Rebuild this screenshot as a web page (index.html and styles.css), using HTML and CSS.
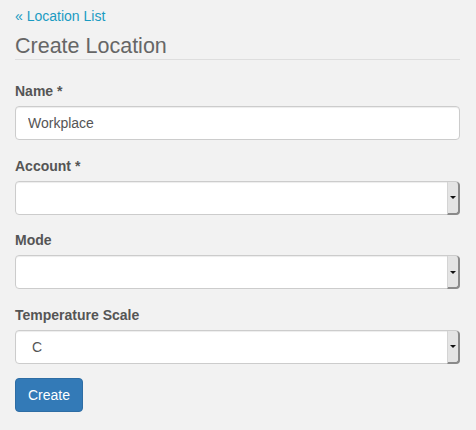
FILE: index.html
```html
<!DOCTYPE html>
<html>
<head>
<meta charset="utf-8">
<link rel="stylesheet" href="styles.css">
</head>
<body>
<div class="page">
  <a class="back" href="#">« Location List</a>
  <h1 class="title">Create Location</h1>
  <form class="form">
    <div class="group">
      <label class="label">Name *</label>
      <input class="control" type="text" value="Workplace">
    </div>
    <div class="group">
      <label class="label">Account *</label>
      <div class="select-wrap">
        <select class="control select"><option></option></select>
        <span class="select-btn"><span class="arrow"></span></span>
      </div>
    </div>
    <div class="group">
      <label class="label">Mode</label>
      <div class="select-wrap">
        <select class="control select"><option></option></select>
        <span class="select-btn"><span class="arrow"></span></span>
      </div>
    </div>
    <div class="group last">
      <label class="label">Temperature Scale</label>
      <div class="select-wrap">
        <select class="control select"><option>C</option></select>
        <span class="select-btn"><span class="arrow"></span></span>
      </div>
    </div>
    <button class="btn" type="button">Create</button>
  </form>
</div>
</body>
</html>
```

FILE: styles.css
```css
html, body {
  margin: 0;
  padding: 0;
  background: #f2f2f2;
}
body {
  font-family: "Liberation Sans", Arial, sans-serif;
  font-size: 14px;
  line-height: 20px;
  color: #555;
}
.page {
  padding: 6px 16px 0 15px;
}
.back {
  display: block;
  color: #1a9bc2;
  text-decoration: none;
}
.title {
  margin: 9px 0 21px;
  padding: 0 0 2px;
  font-size: 21.5px;
  line-height: 22px;
  font-weight: normal;
  color: #666;
  border-bottom: 1px solid #dedede;
}
.group {
  margin-bottom: 15.5px;
}
.group.last {
  margin-bottom: 14px;
}
.label {
  display: block;
  font-weight: bold;
  margin-bottom: 5px;
  color: #555;
}
.control {
  display: block;
  box-sizing: border-box;
  width: 100%;
  height: 34px;
  padding: 6px 12px;
  font-family: inherit;
  font-size: 14px;
  color: #555;
  background: #fff;
  border: 1px solid #ccc;
  border-radius: 4px;
  box-shadow: inset 0 1px 1px rgba(0,0,0,0.075);
  outline: none;
}
.select-wrap {
  position: relative;
}
.select {
  appearance: none;
  -webkit-appearance: none;
  padding-left: 16px;
}
.select-btn {
  position: absolute;
  right: 0;
  top: 1px;
  bottom: 0;
  width: 13px;
  box-sizing: border-box;
  background: #e4e4e4;
  border-right: 2px solid #8a8a8a;
  border-bottom: 2px solid #8a8a8a;
  border-left: 1px solid #d4d4d4;
  border-radius: 0 4px 4px 0;
  display: flex;
  align-items: center;
  justify-content: center;
}
.arrow {
  width: 0;
  height: 0;
  border-left: 3px solid transparent;
  border-right: 3px solid transparent;
  border-top: 3px solid #111;
  margin-top: 1px;
}
.btn {
  display: block;
  height: 34px;
  padding: 6px 12px;
  font-family: inherit;
  font-size: 14px;
  line-height: 20px;
  color: #fff;
  background: #337ab7;
  border: 1px solid #2e6da4;
  border-radius: 4px;
}
```
